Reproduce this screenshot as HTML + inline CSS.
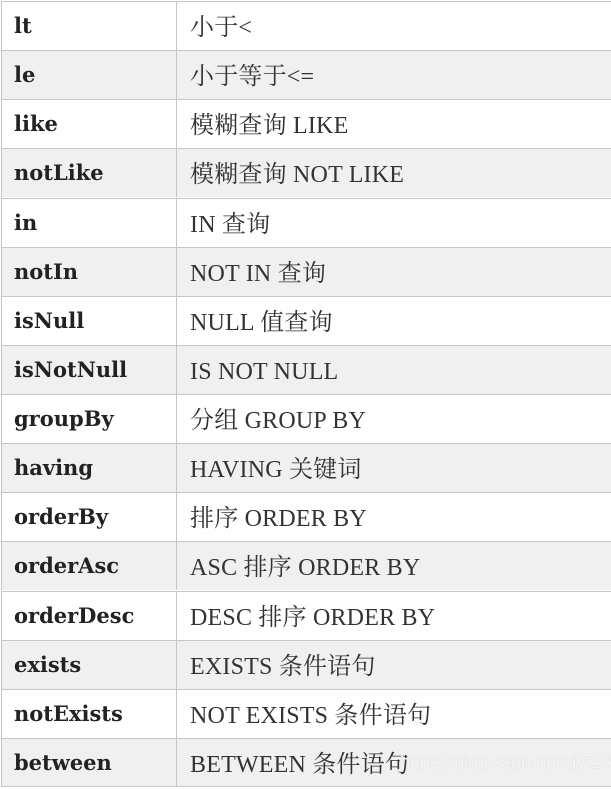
<!DOCTYPE html>
<html><head><meta charset="utf-8"><style>
html,body{margin:0;padding:0;background:#fff;width:611px;height:789px;overflow:hidden;position:relative}
.r{position:absolute;left:1px;width:640px;height:48px;border-top:1.5px solid #c6c6c6;border-left:1.5px solid #c6c6c6;font-size:24px;color:#333}
.r.g{background:#f0f0f0}
.a,.b{position:absolute;top:0;height:48px;white-space:nowrap}
.a{left:12px;line-height:47px;font-family:"DejaVu Serif",serif;font-weight:bold;font-size:21px;color:#222}
.b{left:174px;padding-left:13px;line-height:52px;border-left:1.5px solid #c6c6c6;font-family:"Liberation Serif","Noto Serif CJK SC",serif;letter-spacing:0.2px}
.bot{position:absolute;left:1px;top:786px;width:640px;border-top:1.5px solid #c6c6c6}
.wm{position:absolute;left:400px;top:752px;font-family:"Liberation Sans",sans-serif;font-size:18px;color:rgba(255,255,255,0.85);text-shadow:0 0 1px #bbb}
</style></head><body>
<div class="r" style="top:1px"><div class="a">lt</div><div class="b">小于&lt;</div></div>
<div class="r g" style="top:50.1px"><div class="a">le</div><div class="b">小于等于&lt;=</div></div>
<div class="r" style="top:99.2px"><div class="a">like</div><div class="b">模糊查询 LIKE</div></div>
<div class="r g" style="top:148.4px"><div class="a">notLike</div><div class="b">模糊查询 NOT LIKE</div></div>
<div class="r" style="top:197.5px"><div class="a">in</div><div class="b">IN 查询</div></div>
<div class="r g" style="top:246.6px"><div class="a">notIn</div><div class="b">NOT IN 查询</div></div>
<div class="r" style="top:295.7px"><div class="a">isNull</div><div class="b">NULL 值查询</div></div>
<div class="r g" style="top:344.9px"><div class="a">isNotNull</div><div class="b">IS NOT NULL</div></div>
<div class="r" style="top:394px"><div class="a">groupBy</div><div class="b">分组 GROUP BY</div></div>
<div class="r g" style="top:443.1px"><div class="a">having</div><div class="b">HAVING 关键词</div></div>
<div class="r" style="top:492.2px"><div class="a">orderBy</div><div class="b">排序 ORDER BY</div></div>
<div class="r g" style="top:541.4px"><div class="a">orderAsc</div><div class="b">ASC 排序 ORDER BY</div></div>
<div class="r" style="top:590.5px"><div class="a">orderDesc</div><div class="b">DESC 排序 ORDER BY</div></div>
<div class="r g" style="top:639.6px"><div class="a">exists</div><div class="b">EXISTS 条件语句</div></div>
<div class="r" style="top:688.7px"><div class="a">notExists</div><div class="b">NOT EXISTS 条件语句</div></div>
<div class="r g" style="top:737.9px"><div class="a">between</div><div class="b">BETWEEN 条件语句</div></div>
<div class="bot"></div>
<div class="wm">https://blog.csdn.net/dyf1996</div>
</body></html>
